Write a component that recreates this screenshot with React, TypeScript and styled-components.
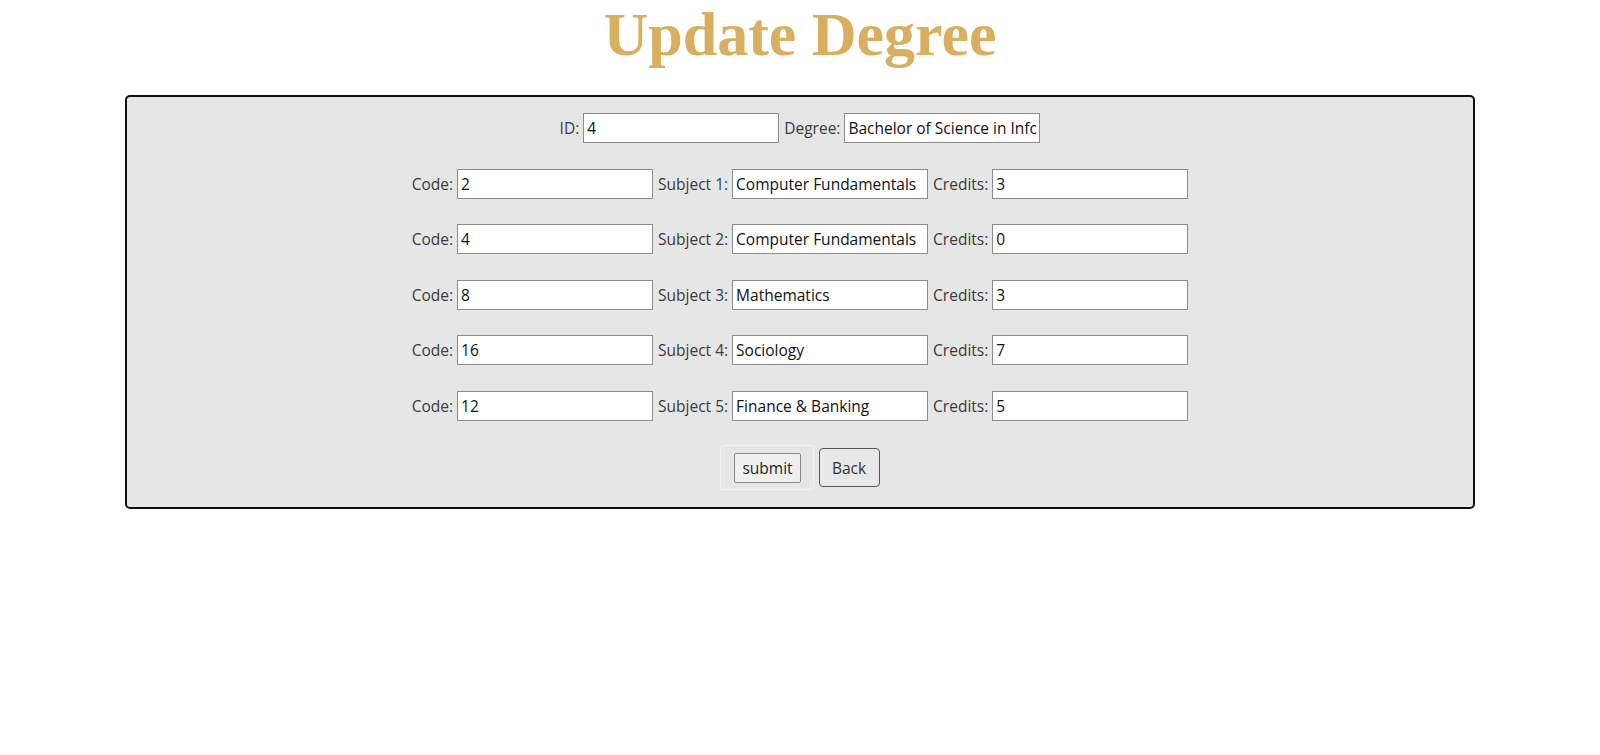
import React from 'react';
import styled, { createGlobalStyle } from 'styled-components';

const GlobalStyle = createGlobalStyle`
  html, body {
    margin: 0;
    padding: 0;
    background: #ffffff;
  }
  body {
    font-family: "Open Sans", "Noto Sans", sans-serif;
  }
`;

const Page = styled.div`
  display: flex;
  flex-direction: column;
  align-items: center;
  gap: 27px;
`;

const Title = styled.h1`
  margin: 0;
  font-family: "Liberation Serif", "Times New Roman", serif;
  font-weight: 700;
  font-size: 62px;
  line-height: 68px;
  color: #d9ae5f;
`;

const Panel = styled.form`
  box-sizing: border-box;
  width: 1350px;
  padding: 16px 0 17px;
  display: flex;
  flex-direction: column;
  gap: 25.5px;
  background: #e6e6e6;
  border: 2px solid #111;
  border-radius: 5px;
`;

const Row = styled.div`
  display: flex;
  justify-content: center;
  align-items: center;
  gap: 5px;
`;

const ButtonRow = styled(Row)`
  margin-top: -1px;
`;

const Field = styled.label`
  display: flex;
  align-items: center;
  gap: 4px;
  font-size: 15.5px;
  color: #3a3a3a;
`;

const Input = styled.input`
  box-sizing: border-box;
  width: 196px;
  height: 30px;
  padding: 1px 3px;
  font-family: inherit;
  font-size: 15.5px;
  color: #111;
  background: #fff;
  border: 1px solid #8c8c8c;
  border-radius: 0;
  outline: none;
`;

const SubmitBox = styled.div`
  display: flex;
  align-items: center;
  padding: 6.5px 12px 6.5px 13px;
  border: 1px solid #f3f3f3;
  border-radius: 3px;
`;

const SubmitButton = styled.button`
  height: 30px;
  padding: 0 7px;
  font-family: inherit;
  font-size: 15.5px;
  color: #222;
  background: #efefef;
  border: 1px solid #8a8a8a;
  border-radius: 2px;
`;

const BackButton = styled.button`
  width: 61px;
  height: 39px;
  padding: 0;
  font-family: inherit;
  font-size: 15.5px;
  color: #333;
  background: #e8e8e8;
  border: 1px solid #555;
  border-radius: 4px;
`;

const subjects = [
  { code: '2', name: 'Computer Fundamentals', credits: '3' },
  { code: '4', name: 'Computer Fundamentals', credits: '0' },
  { code: '8', name: 'Mathematics', credits: '3' },
  { code: '16', name: 'Sociology', credits: '7' },
  { code: '12', name: 'Finance & Banking', credits: '5' },
];

export default function App() {
  return (
    <>
      <GlobalStyle />
      <Page>
        <Title>Update Degree</Title>
        <Panel onSubmit={(e) => e.preventDefault()}>
          <Row>
            <Field>
              ID:
              <Input defaultValue="4" />
            </Field>
            <Field>
              Degree:
              <Input defaultValue="Bachelor of Science in Information Technology" />
            </Field>
          </Row>
          {subjects.map((s, i) => (
            <Row key={i}>
              <Field>
                Code:
                <Input defaultValue={s.code} />
              </Field>
              <Field>
                Subject {i + 1}:
                <Input defaultValue={s.name} />
              </Field>
              <Field>
                Credits:
                <Input defaultValue={s.credits} />
              </Field>
            </Row>
          ))}
          <ButtonRow>
            <SubmitBox>
              <SubmitButton type="submit">submit</SubmitButton>
            </SubmitBox>
            <BackButton type="button">Back</BackButton>
          </ButtonRow>
        </Panel>
      </Page>
    </>
  );
}
